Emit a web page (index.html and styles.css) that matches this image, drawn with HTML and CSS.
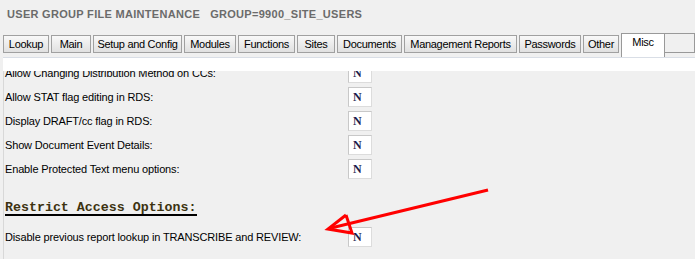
FILE: index.html
```html
<!DOCTYPE html>
<html lang="en">

<head>
	<meta charset="UTF-8" />
	<title>User Group File Maintenance</title>
	<link rel="stylesheet" href="styles.css">
</head>

<body>
	<div class="title">USER GROUP FILE MAINTENANCE   GROUP=9900_SITE_USERS</div>
	<div class="tabs">
		<div class="tab">Lookup</div>
		<div class="tab">Main</div>
		<div class="tab">Setup and Config</div>
		<div class="tab">Modules</div>
		<div class="tab">Functions</div>
		<div class="tab">Sites</div>
		<div class="tab">Documents</div>
		<div class="tab">Management Reports</div>
		<div class="tab">Passwords</div>
		<div class="tab">Other</div>
		<div class="tab active">Misc</div>
		<div class="tab filler"></div>
	</div>
	<div class="panel">
		<div class="band"></div>
		<div class="scroll">
			<div class="rows">
				<div class="row"><span class="label">Allow Changing Distribution Method on CCs:</span><span class="box">N</span></div>
				<div class="row"><span class="label">Allow STAT flag editing in RDS:</span><span class="box">N</span></div>
				<div class="row"><span class="label">Display DRAFT/cc flag in RDS:</span><span class="box">N</span></div>
				<div class="row"><span class="label">Show Document Event Details:</span><span class="box">N</span></div>
				<div class="row"><span class="label">Enable Protected Text menu options:</span><span class="box">N</span></div>
				<div class="heading"><span>Restrict Access Options:</span></div>
				<div class="row"><span class="label">Disable previous report lookup in TRANSCRIBE and REVIEW:</span><span class="box">N</span></div>
			</div>
		</div>
	</div>
	<svg class="arrow" width="695" height="259" viewBox="0 0 695 259">
		<line x1="488" y1="190" x2="331" y2="228" stroke="#ff0000" stroke-width="3" />
		<polyline points="346,215 328,229 352,233 346,215" fill="none" stroke="#ff0000" stroke-width="3" stroke-linejoin="miter" />
	</svg>
</body>

</html>
```

FILE: styles.css
```css
* {
	padding: 0px;
	margin: 0px;
	box-sizing: border-box;
}

body {
	width: 695px;
	height: 259px;
	overflow: hidden;
	background-color: #f0f0f0;
	font-family: "Liberation Sans", Arial, sans-serif;
	font-size: 11px;
	color: #000;
	position: relative;
}

.title {
	height: 33px;
	padding: 8px 0 0 7px;
	font-weight: bold;
	font-size: 11px;
	color: #6b6b6b;
	white-space: pre;
	letter-spacing: 0.3px;
}

.tabs {
	display: grid;
	grid-template-columns: 48px 42px 91px 54px 59px 40px 67px 115px 64px 38px 44px 1fr;
	align-items: start;
	height: 24px;
	padding-left: 3px;
}

.tab {
	height: 18px;
	margin-top: 2px;
	margin-right: 2px;
	border: 1px solid #a0a0a0;
	background: linear-gradient(#f8f8f8, #e0e0e0);
	font-size: 11px;
	letter-spacing: -0.3px;
	line-height: 16px;
	text-align: center;
	white-space: nowrap;
	overflow: hidden;
	color: #000;
}

.tab.active {
	height: 24px;
	margin-top: 0;
	margin-right: 0;
	border-color: #999;
	border-bottom: none;
	background: #fff;
	line-height: 16px;
}

.tab.filler {
	height: 20px;
	margin-top: 0;
	margin-right: 0;
	border-left: none;
	border-color: #999;
	background: #f0f0f0;
}

.panel {
	border-left: 1px solid #d8d8d8;
	margin-left: 3px;
	height: 202px;
	display: flex;
	flex-direction: column;
}

.band {
	height: 14px;
	background: #fff;
	border-top: 1px solid #d9dee6;
	margin-left: -1px;
}

.scroll {
	flex: 1;
	overflow: hidden;
}

.rows {
	margin-top: -10px;
	padding-left: 1px;
}

.row {
	display: flex;
	align-items: center;
	height: 24px;
}

.label {
	width: 343px;
	white-space: nowrap;
	letter-spacing: -0.15px;
}

.box {
	width: 24px;
	height: 20px;
	background: #fff;
	border: 1px solid #dcdcdc;
	border-top-color: #c8c8c8;
	border-left-color: #c8c8c8;
	font-family: "Liberation Serif", "Times New Roman", serif;
	font-weight: bold;
	font-size: 12px;
	line-height: 18px;
	padding-left: 4px;
	color: #1c1c4c;
}

.heading {
	height: 44px;
	padding-top: 20px;
}

.heading span {
	display: inline-block;
	font-family: "Courier New", "Liberation Mono", monospace;
	font-weight: bold;
	font-size: 13.3px;
	line-height: 13px;
	color: #3d3310;
	border-bottom: 2px solid #000;
}

.arrow {
	position: absolute;
	left: 0;
	top: 0;
	pointer-events: none;
}
```
